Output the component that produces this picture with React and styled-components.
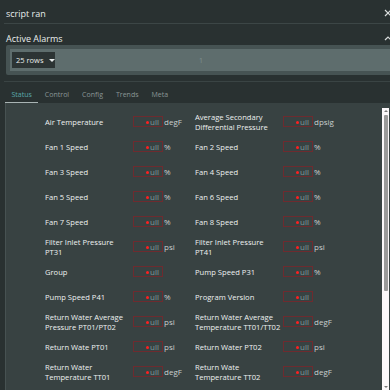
import styled, { createGlobalStyle } from 'styled-components'

const GlobalStyle = createGlobalStyle`
    html, body {
        margin: 0;
        padding: 0;
        background: #293131;
        font-family: "Open Sans", "Noto Sans", sans-serif;
        color: #e4e8e8;
        overflow: hidden;
    }
`

const fields = [
    ['Air Temperature', 'degF'],
    ['Average Secondary Differential Pressure', 'dpsig'],
    ['Fan 1 Speed', '%'],
    ['Fan 2 Speed', '%'],
    ['Fan 3 Speed', '%'],
    ['Fan 4 Speed', '%'],
    ['Fan 5 Speed', '%'],
    ['Fan 6 Speed', '%'],
    ['Fan 7 Speed', '%'],
    ['Fan 8 Speed', '%'],
    ['Filter Inlet Pressure PT31', 'psi'],
    ['Filter Inlet Pressure PT41', 'psi'],
    ['Group', ''],
    ['Pump Speed P31', '%'],
    ['Pump Speed P41', '%'],
    ['Program Version', ''],
    ['Return Water Average Pressure PT01/PT02', 'psi'],
    ['Return Water Average Temperature TT01/TT02', 'degF'],
    ['Return Wate PT01', 'psi'],
    ['Return Water PT02', 'psi'],
    ['Return Water Temperature TT01', 'degF'],
    ['Return Wate Temperature TT02', 'degF'],
]

const tabs = ['Status', 'Control', 'Config', 'Trends', 'Meta']

const App = () => {
    return (
        <Page>
            <GlobalStyle />
            <HeaderRow>
                <Title>script ran</Title>
                <svg width="8" height="8" viewBox="0 0 8 8">
                    <path d="M1 1 L7 7 M7 1 L1 7" stroke="#d8dcdc" strokeWidth="1.2" />
                </svg>
            </HeaderRow>
            <SectionRow>
                <Title>Active Alarms</Title>
                <svg width="8" height="6" viewBox="0 0 8 6">
                    <path d="M1 5 L4 2 L7 5" stroke="#d8dcdc" strokeWidth="1.2" fill="none" />
                </svg>
            </SectionRow>
            <AlarmPanel>
                <AlarmInner>
                    <RowsSelect>
                        25 rows
                        <Caret />
                    </RowsSelect>
                    <PageNumber>1</PageNumber>
                </AlarmInner>
            </AlarmPanel>
            <Divider />
            <TabBar>
                {tabs.map((t, i) => (
                    <Tab key={t} $active={i === 0}>{t}</Tab>
                ))}
            </TabBar>
            <ContentPanel>
                <FieldGrid>
                    {fields.map(([label, unit]) => (
                        <Field key={label}>
                            <Label>{label}</Label>
                            <ValueBox>
                                <Ghost>n</Ghost>ull
                            </ValueBox>
                            <Unit>{unit}</Unit>
                        </Field>
                    ))}
                </FieldGrid>
                <Scrollbar>
                    <ArrowUp />
                    <Thumb />
                    <ArrowDown />
                </Scrollbar>
            </ContentPanel>
        </Page>
    )
}

export default App

const Page = styled.div`
    width: 390px;
    height: 390px;
    display: flex;
    flex-direction: column;
    overflow: hidden;
`

const HeaderRow = styled.div`
    height: 24px;
    margin: 0 0 0 4px;
    padding: 3px 0 0 2px;
    display: flex;
    align-items: center;
    justify-content: space-between;
    border-bottom: 1px solid #3c4646;
    box-sizing: border-box;
    svg { margin-right: -2px; }
`

const SectionRow = styled.div`
    height: 21px;
    padding: 7px 0 0 6px;
    display: flex;
    align-items: center;
    justify-content: space-between;
    box-sizing: border-box;
    svg { margin-right: -2px; }
`

const Title = styled.span`
    font-size: 9px;
    color: #e8ecec;
`

const AlarmPanel = styled.div`
    margin-left: 6px;
    height: 30px;
    background: #465353;
    padding: 4px 0 4px 4px;
    box-sizing: border-box;
    border-radius: 2px 0 0 2px;
`

const AlarmInner = styled.div`
    height: 100%;
    background: #5e6d6d;
    display: flex;
    align-items: center;
    padding-left: 2px;
    position: relative;
`

const RowsSelect = styled.div`
    width: 43px;
    height: 16px;
    background: #2c3434;
    color: #e8ecec;
    font-size: 7.5px;
    display: flex;
    align-items: center;
    gap: 5px;
    padding-left: 4px;
    box-sizing: border-box;
`

const Caret = styled.span`
    width: 0;
    height: 0;
    border-left: 3px solid transparent;
    border-right: 3px solid transparent;
    border-top: 3px solid #e8ecec;
`

const PageNumber = styled.span`
    position: absolute;
    left: 189px;
    font-size: 7px;
    color: #7f9090;
`

const Divider = styled.div`
    margin: 6px 0 0 4px;
    border-top: 1px solid #3a4444;
`

const TabBar = styled.div`
    height: 21px;
    display: flex;
    align-items: flex-end;
    padding-left: 5px;
`

const Tab = styled.div`
    font-size: 7px;
    color: ${p => (p.$active ? '#5aa8aa' : '#8a9696')};
    padding: 0 6.5px 3px 6.5px;
    border-bottom: 1px solid ${p => (p.$active ? '#a9b4b4' : 'transparent')};
`

const ContentPanel = styled.div`
    flex: 1;
    margin-left: 5px;
    background: #384242;
    border-left: 1px solid #475252;
    display: flex;
    min-height: 0;
`

const FieldGrid = styled.div`
    flex: 1;
    display: grid;
    grid-template-columns: 150px 150px;
    grid-auto-rows: 25px;
    padding: 6px 0 0 39px;
    align-content: start;
`

const Field = styled.div`
    display: flex;
    align-items: center;
`

const Label = styled.div`
    width: 88px;
    font-size: 7.6px;
    line-height: 10px;
    color: #eef1f1;
`

const ValueBox = styled.div`
    width: 30px;
    height: 11px;
    border: 1px solid #6e2b2f;
    box-sizing: border-box;
    font-size: 8px;
    line-height: 9px;
    color: #7e9a9a;
    text-align: right;
    padding-right: 3px;
`

const Ghost = styled.span`
    position: relative;
    color: transparent;
    &::after {
        content: '';
        position: absolute;
        left: 1px;
        top: 5px;
        width: 3px;
        height: 3px;
        border-radius: 50%;
        background: #ff2020;
    }
`

const Unit = styled.span`
    font-size: 8px;
    color: #c9cfcf;
    margin-left: 1px;
`

const Scrollbar = styled.div`
    width: 7px;
    margin: 5px 1px 0 0;
    background: #fbf8fa;
    display: flex;
    flex-direction: column;
    align-items: center;
    padding: 2px 0;
    box-sizing: border-box;
`

const ArrowUp = styled.span`
    width: 0;
    height: 0;
    border-left: 2px solid transparent;
    border-right: 2px solid transparent;
    border-bottom: 2px solid #777;
    margin-bottom: 3px;
`

const Thumb = styled.div`
    width: 4px;
    height: 176px;
    background: #9a9a9a;
    border-radius: 1px;
`

const ArrowDown = styled.span`
    width: 0;
    height: 0;
    border-left: 2px solid transparent;
    border-right: 2px solid transparent;
    border-top: 2px solid #777;
    margin-top: auto;
`
